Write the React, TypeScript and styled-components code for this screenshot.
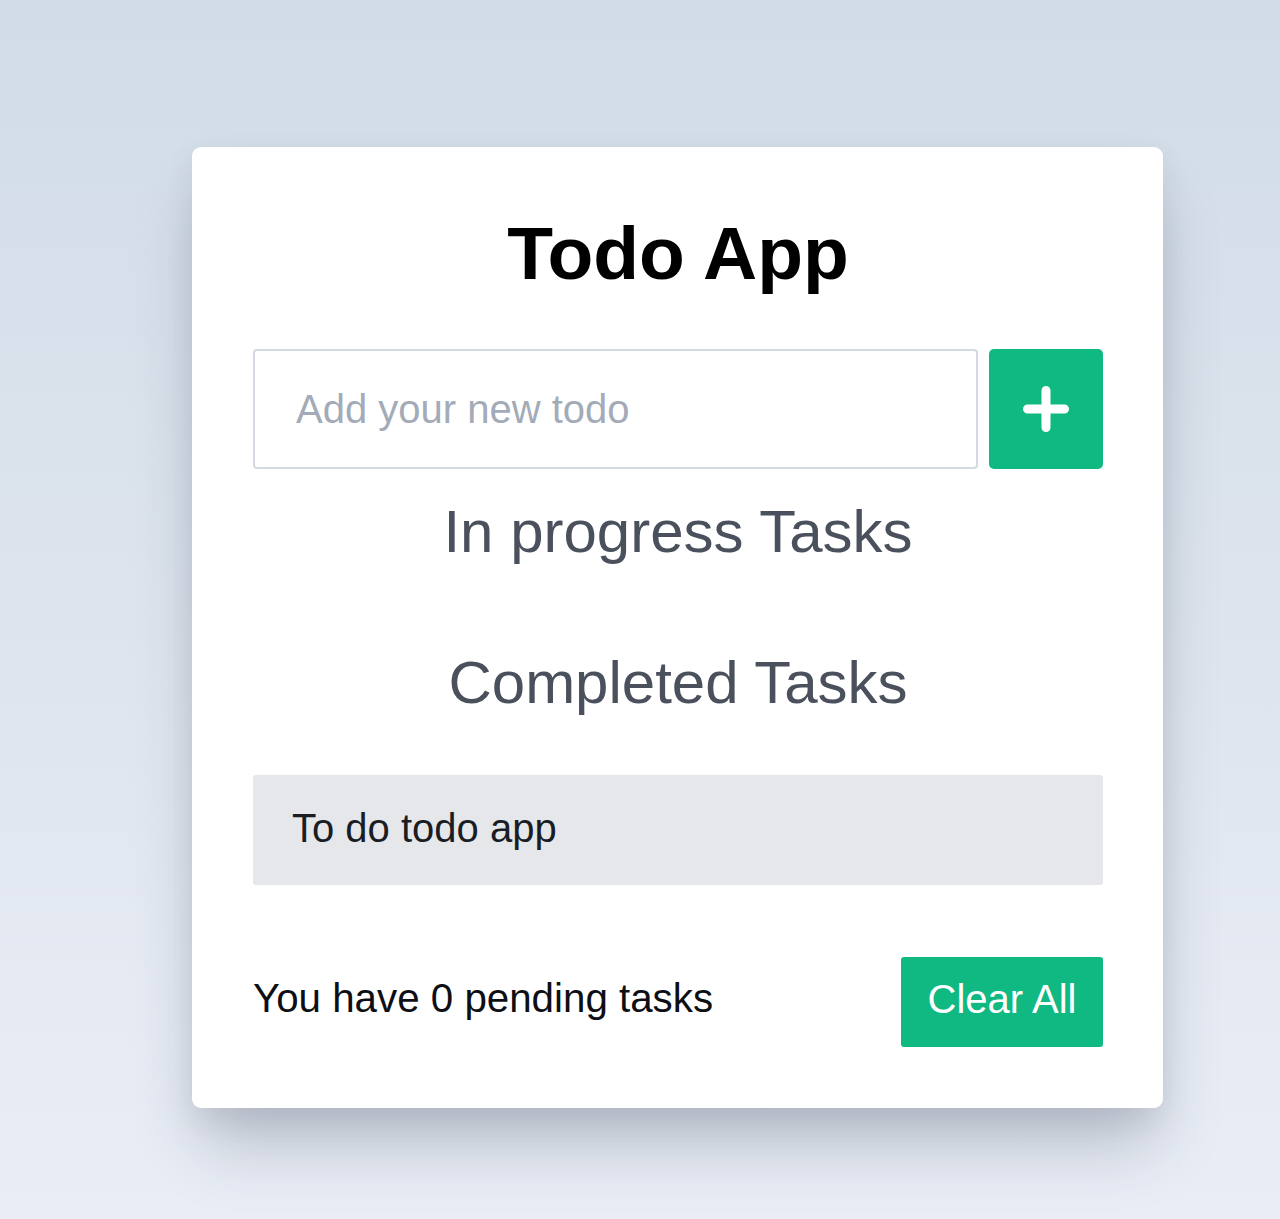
import React from "react";
import styled, { createGlobalStyle } from "styled-components";

const GlobalStyle = createGlobalStyle`
  html, body {
    margin: 0;
    padding: 0;
  }
  body {
    font-family: "Liberation Sans", Arial, sans-serif;
  }
  * { box-sizing: border-box; }
`;

const Page = styled.div`
  min-height: 1219px;
  background: linear-gradient(to bottom, #d1dce7 0%, #dfe5ef 55%, #e9edf6 100%);
  padding: 147px 0 0 192px;
`;

const Card = styled.div`
  width: 971px;
  background: #ffffff;
  border-radius: 9px;
  padding: 61px 60px 61px 61px;
  display: flex;
  flex-direction: column;
  box-shadow: 0 45px 60px -10px rgba(40, 50, 70, 0.25), 0 10px 30px rgba(40, 50, 70, 0.08);
`;

const Title = styled.h1`
  margin: 0;
  font-size: 75px;
  line-height: 90px;
  font-weight: 700;
  color: #000;
  text-align: center;
`;

const InputRow = styled.div`
  display: flex;
  gap: 11px;
  margin-top: 51px;
  height: 120px;
`;

const TodoInput = styled.input`
  flex: 1;
  height: 120px;
  border: 2px solid #d5dae2;
  border-radius: 4px;
  padding: 0 0 0 41px;
  font-family: "Liberation Sans", Arial, sans-serif;
  font-size: 40px;
  color: #111;
  outline: none;
  &::placeholder {
    color: #a3abb8;
  }
`;

const AddButton = styled.button`
  width: 114px;
  height: 120px;
  border: none;
  border-radius: 5px;
  background: #10b981;
  display: flex;
  align-items: center;
  justify-content: center;
  padding: 0;
  cursor: pointer;
`;

const SectionTitle = styled.h2<{ $top: number }>`
  margin: ${(p) => p.$top}px 0 0;
  font-size: 60px;
  line-height: 69px;
  font-weight: 400;
  color: #4a505c;
  text-align: center;
`;

const TaskItem = styled.div`
  margin-top: 58px;
  height: 110px;
  background: #e5e7eb;
  border-radius: 3px;
  display: flex;
  align-items: center;
  padding: 0 0 4px 39px;
  font-size: 40px;
  color: #1a1d24;
`;

const Footer = styled.div`
  margin-top: 72px;
  display: flex;
  align-items: center;
  justify-content: space-between;
  height: 90px;
`;

const Pending = styled.span`
  font-size: 40.3px;
  color: #0d0f14;
  padding-bottom: 6px;
`;

const ClearButton = styled.button`
  width: 202px;
  height: 90px;
  border: none;
  border-radius: 3px;
  background: #10b981;
  color: #ffffff;
  font-family: "Liberation Sans", Arial, sans-serif;
  font-size: 40px;
  padding: 0 0 5px;
  cursor: pointer;
`;

const PlusIcon = () => (
  <svg width="48" height="48" viewBox="0 0 48 48" fill="none">
    <path d="M24 5.5V42.5M5.5 24H42.5" stroke="#ffffff" strokeWidth="9" strokeLinecap="round" />
  </svg>
);

export default function App() {
  return (
    <>
      <GlobalStyle />
      <Page>
        <Card>
          <Title>Todo App</Title>
          <InputRow>
            <TodoInput placeholder="Add your new todo" />
            <AddButton aria-label="Add">
              <PlusIcon />
            </AddButton>
          </InputRow>
          <SectionTitle $top={28}>In progress Tasks</SectionTitle>
          <SectionTitle $top={82}>Completed Tasks</SectionTitle>
          <TaskItem>To do todo app</TaskItem>
          <Footer>
            <Pending>You have 0 pending tasks</Pending>
            <ClearButton>Clear All</ClearButton>
          </Footer>
        </Card>
      </Page>
    </>
  );
}
